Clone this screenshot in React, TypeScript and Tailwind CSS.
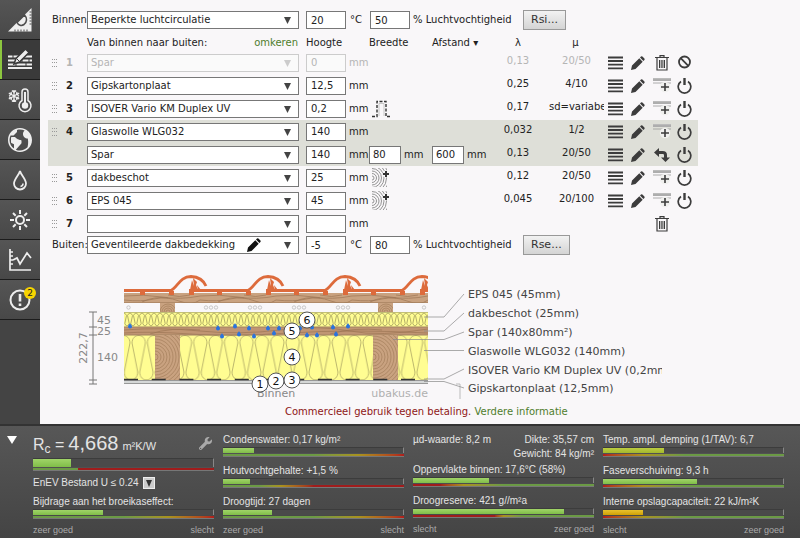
import type { ReactNode } from 'react'
import { FaWrench } from 'react-icons/fa'
import { ImEarth } from 'react-icons/im'

type Layer = {
  no?: number
  material: string
  height: string
  width?: string
  spacing?: string
  lambda?: string
  mu?: string
  extra?: 'foil' | 'wood'
  tool?: 'trash' | 'insert' | 'turn'
  disabled?: boolean
  active?: boolean
}

const LAYERS: Layer[] = [
  { no: 1, material: 'Spar', height: '0', lambda: '0,13', mu: '20/50', tool: 'trash', disabled: true },
  { no: 2, material: 'Gipskartonplaat', height: '12,5', lambda: '0,25', mu: '4/10', tool: 'insert' },
  { no: 3, material: 'ISOVER Vario KM Duplex UV', height: '0,2', lambda: '0,17', mu: 'sd=variabel', extra: 'foil', tool: 'insert' },
  { no: 4, material: 'Glaswolle WLG032', height: '140', lambda: '0,032', mu: '1/2', tool: 'insert', active: true },
  { material: 'Spar', height: '140', width: '80', spacing: '600', lambda: '0,13', mu: '20/50', tool: 'turn', active: true },
  { no: 5, material: 'dakbeschot', height: '25', lambda: '0,12', mu: '20/50', extra: 'wood', tool: 'insert' },
  { no: 6, material: 'EPS 045', height: '45', lambda: '0,045', mu: '20/100', extra: 'wood', tool: 'insert' },
  { no: 7, material: '', height: '', tool: 'trash' },
]

/* ---------- icons ---------- */

const RulerIcon = () => (
  <svg width="26" height="26" viewBox="0 0 26 26" fill="none">
    <path d="M1 24.500 24.500 1V24.500Z" fill="#eee" />
    <path d="M10 15.500 17.500 8C20.500 11 20 15 17 17.500 14.500 19.300 11.500 18.500 10 15.500Z" fill="#eee" stroke="#4c4c4c" strokeWidth="1.600" />
    <path d="M22.500 5h2M22.500 8h2M22.500 11h2M22.500 14h2M22.500 17h2M20 22.500v2M17 22.500v2M14 22.500v2M11 22.500v2M8 22.500v2" stroke="#4c4c4c" />
  </svg>
)

const LayersIcon = () => (
  <svg width="26" height="22" viewBox="0 0 26 22">
    <path d="M1 7.500h24M1 11.500h24M1 15.500h24M1 19h24" stroke="#eee" strokeWidth="2.200" />
    <path d="M6 6v4M15 10v4M22 10v4M9 14v4M19 14v4" stroke="#3a3a3a" />
    <path d="M7 15 9 9.500 18.500 0 22 3.500 12.500 13Z" fill="#eee" stroke="#3a3a3a" strokeWidth="1.500" />
    <path d="m9.500 9.500 3 3" stroke="#3a3a3a" />
  </svg>
)

const ClimateIcon = () => (
  <svg width="26" height="26" viewBox="0 0 26 26" fill="none" stroke="#eee">
    <path
      d="M7 3v12M1.800 6l10.400 6M12.200 6 1.800 12M5 3.500l2 2 2-2M5 14.500l2-2 2 2M2 8.500l2.500-1L4 5M12 8.500l-2.500-1L10 5M2 9.800l2.500 1L4 13M12 9.800l-2.500 1 .5 2.200"
      strokeWidth="1.300"
    />
    <path d="M15 13.500V5a3 3 0 0 1 6 0v8.500a6 6 0 1 1-6 0Z" strokeWidth="1.500" />
    <path d="M18 5v11" strokeWidth="2" />
    <circle cx="18" cy="18.500" r="3.200" fill="#eee" stroke="none" />
  </svg>
)

const DropIcon = () => (
  <svg width="16" height="22" viewBox="0 0 16 22" fill="none" stroke="#eee" strokeWidth="1.800">
    <path d="M8 2C7 6 2 10 2 14.500a6 6 0 0 0 12 0C14 10 9 6 8 2Z" />
    <path d="M11 14.500a3 3 0 0 1-2.500 3" strokeWidth="1.500" />
  </svg>
)

const SunIcon = () => (
  <svg width="22" height="22" viewBox="0 0 22 22" fill="none" stroke="#eee" strokeWidth="2">
    <circle cx="11" cy="11" r="4" />
    <path d="M11 1v4M11 17v4M1 11h4M17 11h4M4 4l2.700 2.700M15.300 15.300 18 18M4 18l2.700-2.700M15.300 6.700 18 4" />
  </svg>
)

const ChartIcon = () => (
  <svg width="24" height="24" viewBox="0 0 24 24" fill="none" stroke="#eee" strokeWidth="1.700">
    <path d="M2 1v21h21M2 4h3M2 8h3M2 12h3M2 16h3" />
    <path d="m5 12 4-2 3 6 7-11 4 5" />
  </svg>
)

const AlertIcon = () => (
  <svg width="22" height="22" viewBox="0 0 22 22" fill="none" stroke="#eee" strokeWidth="2">
    <circle cx="11" cy="11" r="9.500" />
    <path d="M11 5v7.500M11 14.500V17" strokeWidth="2.600" />
  </svg>
)

const PencilIcon = () => (
  <svg width="14" height="14" viewBox="0 0 14 14" fill="currentColor">
    <path d="M0 14 1 9.500 8.300 2.300 11.700 5.700 4.500 13ZM9 1.600 10 .6Q10.700 0 11.400.6L13.400 2.600Q14 3.300 13.400 4L12.400 5Z" />
  </svg>
)

const MenuIcon = () => (
  <svg width="15" height="14" viewBox="0 0 15 14" stroke="#3c3c3c" strokeWidth="1.800">
    <path d="M0 1.500h15M0 5h15M0 8.700h15M0 12.400h15" />
  </svg>
)

const TrashIcon = () => (
  <svg width="14" height="16" viewBox="0 0 14 16" fill="none" stroke="#3c3c3c" strokeWidth="1.200">
    <path d="M0 2.500h14M5 2V.7h4V2M2 3v12h10V3" />
    <path d="M4.500 5v8M6.200 5v8M7.900 5v8M9.500 5v8" strokeWidth="1" />
  </svg>
)

const InsertIcon = () => (
  <svg width="18" height="16" viewBox="0 0 18 16" fill="none">
    <path d="M0 1.500h18" stroke="#bbb" strokeWidth="3" />
    <path d="M0 5h18M0 2h18" stroke="#999" strokeWidth=".8" />
    <circle cx="12" cy="9" r="5.200" fill="#f0f0ee" />
    <path d="M12 5v8M8 9h8" stroke="#3c3c3c" strokeWidth="1.600" />
  </svg>
)

const TurnIcon = () => (
  <svg width="16" height="16" viewBox="0 0 16 16" fill="#3c3c3c">
    <path d="M0 5.500 5 1v3h3.500C11.500 4 13 5.500 13 8v2.500h3L11.500 15 7 10.500h3V8.200C10 7.300 9.500 7 8.500 7H5v3Z" />
  </svg>
)

const PowerIcon = () => (
  <svg width="15" height="16" viewBox="0 0 15 16" fill="none" stroke="#3c3c3c">
    <path d="M4 3.500a6.300 6.300 0 1 0 7 0" strokeWidth="1.700" />
    <path d="M7.500 0v7" strokeWidth="2.400" />
  </svg>
)

const BanIcon = () => (
  <svg width="15" height="16" viewBox="0 0 15 16" fill="none" stroke="#3c3c3c" strokeWidth="1.800">
    <circle cx="7.500" cy="7" r="5.500" />
    <path d="m3.700 3.200 7.600 7.600" />
  </svg>
)

const GripIcon = () => (
  <svg width="6" height="10" viewBox="0 0 6 10" fill="#999">
    <path d="M0 1h1v1H0zM2 1h1v1H2zM4 1h1v1H4zM0 4h1v1H0zM2 4h1v1H2zM4 4h1v1H4zM0 8h1v1H0zM2 8h1v1H2zM4 8h1v1H4z" />
  </svg>
)

const FoilIcon = () => (
  <svg width="20" height="18" viewBox="0 0 20 18" fill="none" stroke="#333" strokeWidth="1.400">
    <path d="M0 16.500h5V1.500h9v15h5" strokeDasharray="3 1.500" />
    <path d="M7 16V3.500h5V16" stroke="#bbb" strokeWidth=".8" />
  </svg>
)

const WoodIcon = () => (
  <svg width="18" height="19" viewBox="0 0 18 19" fill="none" stroke="#888" strokeWidth=".9">
    <svg width="15" height="19">
      {[2, 4.5, 7, 9.5, 12, 14.5, 17].map((r) => (
        <circle key={r} cx="0" cy="10" r={r} />
      ))}
    </svg>
    <circle cx="14" cy="6" r="3.500" fill="#f9f8f9" stroke="none" />
    <path d="M14 3v6M11 6h6" stroke="#333" strokeWidth="2" />
  </svg>
)

/* ---------- form parts ---------- */

function Combo({ label, value, disabled, pencil }: { label: string; value: string; disabled?: boolean; pencil?: boolean }) {
  return (
    <div className="relative w-[212px] shrink-0">
      <select
        aria-label={label}
        disabled={disabled}
        defaultValue={value}
        className="block h-[18px] w-full appearance-none border border-[#777] bg-white pl-[3px] text-[10px] leading-4 text-[#222] disabled:border-[#ccc] disabled:bg-[#fafafa] disabled:text-[#b5b5b5]"
      >
        <option>{value}</option>
      </select>
      {pencil && <span className="absolute top-0.5 right-[38px] text-[#111]"><PencilIcon /></span>}
      <svg
        className={disabled ? 'absolute top-1.5 right-2 text-[#ccc]' : 'absolute top-1.5 right-2 text-[#444]'}
        width="7"
        height="7"
        fill="currentColor"
      >
        <path d="M0 0h7L3.500 7Z" />
      </svg>
    </div>
  )
}

function Field({ label, value, disabled, narrow }: { label: string; value: string; disabled?: boolean; narrow?: boolean }) {
  return (
    <input
      aria-label={label}
      defaultValue={value}
      disabled={disabled}
      className={
        'block h-[18px] shrink-0 border border-[#777] bg-white pl-1 text-[10px] leading-4 text-[#222] disabled:border-[#ccc] disabled:bg-[#fafafa] disabled:text-[#b5b5b5] ' +
        (narrow ? 'w-8 pl-[3px]' : 'w-10')
      }
    />
  )
}

type BoundaryProps = { name: string; value: string; temp: string; humidity: string; button: string; pencil?: boolean }

function Boundary({ name, value, temp, humidity, button, pencil }: BoundaryProps) {
  return (
    <div className="flex h-5 items-center pl-3">
      <span className="w-[35px] shrink-0">{name}</span>
      <Combo label={name} value={value} pencil={pencil} />
      <div className="ml-[7px] flex items-center">
        <Field label={`${name} temperatuur`} value={temp} />
        <span className="w-6 pl-1">°C</span>
        <Field label={`${name} luchtvochtigheid`} value={humidity} />
        <span className="w-[113px] pl-[3px] whitespace-nowrap">% Luchtvochtigheid</span>
      </div>
      <button className="h-5 border border-[#999] bg-linear-to-b from-[#f2f2f2] to-[#d4d4d4] px-[7px] text-[11px] leading-4 text-[#333]">
        {button}
      </button>
    </div>
  )
}

function IconButton({ label, children }: { label: string; children: ReactNode }) {
  return (
    <button aria-label={label} className="flex items-center justify-center text-[#3c3c3c]">
      {children}
    </button>
  )
}

function LayerRow({ layer }: { layer: Layer }) {
  const { no, disabled, active, tool } = layer
  const name = no ? `Laag ${no}` : 'Tussenlaag'
  return (
    <tr className={(active ? 'bg-[#dedfd8] ' : '') + (disabled ? 'text-[#b5b5b5]' : '')}>
      <td className="h-[23px] pl-1">{no && <GripIcon />}</td>
      <td className="pl-1 font-bold">{no}</td>
      <td>
        <Combo label={`${name} materiaal`} value={layer.material} disabled={disabled} />
      </td>
      <td>
        <div className="flex items-center gap-[3px]">
          <Field label={`${name} hoogte`} value={layer.height} disabled={disabled} />
          mm
        </div>
      </td>
      <td>
        <div className="flex items-center gap-[3px]">
          {layer.width && (
            <>
              <Field narrow label={`${name} breedte`} value={layer.width} />
              mm
            </>
          )}
          {layer.extra && (
            <span className="pl-[3px]">{layer.extra === 'foil' ? <FoilIcon /> : <WoodIcon />}</span>
          )}
        </div>
      </td>
      <td>
        {layer.spacing && (
          <div className="flex items-center gap-[3px]">
            <Field narrow label={`${name} afstand`} value={layer.spacing} />
            mm
          </div>
        )}
      </td>
      <td className="pb-[3px] text-center">{layer.lambda}</td>
      <td className="overflow-hidden pb-[3px] pl-[2px] text-center whitespace-nowrap">{layer.mu}</td>
      <td>
        <div className="grid grid-cols-[22px_24px_24px_20px] items-center">
          {layer.mu ? (
            <>
              <IconButton label="Eigenschappen"><MenuIcon /></IconButton>
              <IconButton label="Bewerken"><PencilIcon /></IconButton>
            </>
          ) : (
            <span className="col-span-2" />
          )}
          {tool === 'trash' && <IconButton label="Verwijderen"><TrashIcon /></IconButton>}
          {tool === 'insert' && <IconButton label="Invoegen"><InsertIcon /></IconButton>}
          {tool === 'turn' && <IconButton label="Draaien"><TurnIcon /></IconButton>}
          {layer.mu && (
            <IconButton label="Aan/uit">{disabled ? <BanIcon /> : <PowerIcon />}</IconButton>
          )}
        </div>
      </td>
    </tr>
  )
}

/* ---------- cross section ---------- */

const TILES = [112, 189, 266, 343, 420]
const DROPS = [
  [130, 326], [218, 328], [222, 336], [235, 326], [249, 328], [239, 334], [254, 336], [268, 328], [274, 333],
  [279, 328], [300, 328], [307, 335], [312, 327], [317, 335], [333, 327], [336, 334], [348, 326],
]
const MARKERS = [
  [260, 384], [276, 381], [292, 380], [292, 357], [292, 331], [307, 320],
]
const LEGEND = [
  { text: 'EPS 045 (45mm)', y: 294, line: 'M424 317H444L464 294' },
  { text: 'dakbeschot (25mm)', y: 313, line: 'M424 331H444L464 313' },
  { text: 'Spar (140x80mm²)', y: 332, line: 'M393 339.500H444L464 332' },
  { text: 'Glaswolle WLG032 (140mm)', y: 351, line: 'M424 350.500H464' },
  { text: 'ISOVER Vario KM Duplex UV (0,2mm)', y: 370, line: 'M424 379H444L464 369' },
  { text: 'Gipskartonplaat (12,5mm)', y: 388, line: 'M424 381.500H444L464 388' },
]

function CrossSection() {
  return (
    <svg className="ml-9 block font-['DejaVu_Sans',sans-serif]" width="586" height="134" viewBox="76 270 586 134" fontSize="11">
      <defs>
        <clipPath id="section">
          <rect x="124" y="270" width="304" height="116" />
        </clipPath>
        <pattern id="eps" x="124" y="312" width="6" height="15" patternUnits="userSpaceOnUse">
          <path d="M-2.500 3.500Q0-1.500 2.500 3.500L.8 11.500Q3 16.500 5.200 11.500L3.500 3.500Q6-1.500 8.500 3.500" fill="none" stroke="#a09b5c" strokeWidth=".8" />
        </pattern>
        <pattern id="wool" x="123.300" y="335" width="15.400" height="45" patternUnits="userSpaceOnUse">
          <path
            d="M-6.700 8C-6.700-2 6.700-2 6.700 8L1 37C1 47.500 14.400 47.500 14.400 37L8.700 8C8.700-2 22.100-2 22.100 8"
            fill="none"
            stroke="#b5af68"
            strokeWidth=".9"
          />
        </pattern>
        <pattern id="grain" x="124" y="293" width="76" height="10" patternUnits="userSpaceOnUse">
          <path d="M0 3Q20 1 38 4T76 3M0 7Q18 9 30 6T55 8 76 7M18 9q12-6 26-4M44 2q12 3 22 0" fill="none" stroke="#9c7554" strokeWidth=".7" />
        </pattern>
        <clipPath id="beams">
          <path d="M155 335h25v45h-25zM373 335h25v45h-25zM160 303h15v9h-15zM378 303h15v9h-15z" />
        </clipPath>
      </defs>

      <g clipPath="url(#section)">
        {/* battens */}
        <path d="M124 293h304v10H124zM160 303h15v9h-15zM378 303h15v9h-15z" fill="#c9a280" />
        <path d="M124 293h304v10H124z" fill="url(#grain)" />
        <path d="M124 302.500h304" stroke="#a57f5d" strokeWidth=".7" />
        {[205, 249, 293, 337].map((x) => (
          <g key={x} fill="none" stroke="#bbb" strokeWidth=".8">
            <circle cx={x + 1} cy="307.500" r="1.700" />
            <circle cx={x + 6} cy="307.500" r="1.700" />
            <circle cx={x + 11} cy="307.500" r="1.700" />
          </g>
        ))}
        <g fill="none" stroke="#bbb" strokeWidth=".8">
          <circle cx="128.500" cy="307.500" r="1.700" />
          <circle cx="424" cy="307.500" r="1.700" />
        </g>

        {/* roof tiles */}
        {TILES.map((x) => (
          <g key={x} fill="#dd6b3c">
            <path d={`M${x} 289h60v3h-60zM${x} 289h5v6h-5zM${x + 28} 291h5v4h-5zM${x + 57} 291h5v4h-5z`} />
            <path d={`M${x + 1} 290l2-10 2 6-1-8 4 4-1 3 2 5-1-5 4 5z`} />
            <path d={`M${x + 58} 291C${x + 66} 288 ${x + 67} 276.500 ${x + 79} 276.500Q${x + 90} 277 ${x + 94} 286`} fill="none" stroke="#dd6b3c" strokeWidth="2.800" />
          </g>
        ))}

        {/* insulation and sheathing */}
        <path d="M124 312h304v15H124zM124 335h304v45H124z" fill="#fffd92" />
        <path d="M124 312h304v15H124z" fill="url(#eps)" />
        <path d="M124 335h304v45H124z" fill="url(#wool)" />
        <path d="M124 312.500h304" stroke="#aaa66a" strokeWidth=".7" />
        <path d="M124 327h304v8H124z" fill="#c09573" />
        <path d="M124 330Q160 327 200 331T280 330 350 331 428 329M124 333Q150 331 190 334T290 333 428 333M150 334q20-7 50-4M330 334q24-7 52-4" fill="none" stroke="#9c7554" strokeWidth=".7" />
        <path d="M124 327h304M124 335h304" stroke="#a28263" />

        {/* rafters */}
        <path d="M155 335h25v45h-25zM373 335h25v45h-25z" fill="#c9a280" />
        <g clipPath="url(#beams)" fill="none" stroke="#a8835f" strokeWidth=".8">
          {[3, 6, 9, 12, 15, 18, 21, 24, 27, 30, 33, 36, 39].map((r) => (
            <g key={r}>
              <circle cx="155" cy="357" r={r} />
              <circle cx="373" cy="357" r={r} />
            </g>
          ))}
          {[2, 4, 6, 8].map((r) => (
            <g key={r}>
              <circle cx="168" cy="312" r={r} />
              <circle cx="386" cy="312" r={r} />
            </g>
          ))}
        </g>

        {/* vapour barrier and plasterboard */}
        <path d="M124 380h304v4H124z" fill="#d5d7d7" />
        <path d="M124 380.500h304M124 383.500h304" stroke="#888" strokeWidth=".8" />
        <path d="M124 379.500h304" stroke="#333" strokeWidth="1.500" strokeDasharray="14 13.700" />
      </g>

      {DROPS.map(([x, y]) => (
        <path key={`${x}-${y}`} d={`M${x} ${y - 3}c.5 1.500 2 2 2 3.500a2 2 0 0 1-4 0c0-1.500 1.500-2 2-3.500`} fill="#2a73dd" />
      ))}

      {/* dimensions */}
      <path d="M93 312v72M89 312h8M89 327h8M89 335h8M89 380h8M89 384h8" stroke="#777" fill="none" />
      <g fill="#888">
        <text x="97" y="324">45</text>
        <text x="97" y="335">25</text>
        <text x="97" y="361">140</text>
        <text transform="translate(87 348) rotate(-90)" textAnchor="middle">222,7</text>
        <text x="257" y="397">Binnen</text>
        <text x="428" y="397" textAnchor="end" fill="#b0b0b0">ubakus.de</text>
      </g>

      {MARKERS.map(([x, y], i) => (
        <g key={i}>
          <circle cx={x} cy={y} r="8" fill="#fff" stroke="#555" />
          <text x={x} y={y + 4} textAnchor="middle" fill="#111">{i + 1}</text>
        </g>
      ))}

      <path d="M456 384h4v15" fill="none" stroke="#bbb" />
      {LEGEND.map((item) => (
        <g key={item.text}>
          <path d={item.line} fill="none" stroke="#888" strokeWidth=".7" />
          <text x="468" y={item.y + 4} fill="#444">{item.text}</text>
        </g>
      ))}
    </svg>
  )
}

/* ---------- results ---------- */

const FILLS = {
  green: 'h-full bg-linear-to-b from-[#a0d468] to-[#80bd48]',
  lime: 'h-full bg-linear-to-b from-[#bccc40] to-[#a3b82c]',
  amber: 'h-full bg-linear-to-b from-[#e8c22c] to-[#d0a000]',
}

const SCALES = {
  limit: 'h-0.5 bg-linear-to-r from-[#6b9a45] from-25% to-[#a01c1c] to-25%',
  good: 'h-0.5 bg-linear-to-r from-[#6b9a45] from-50% via-[#a8921e] via-75% to-[#b01c1c]',
  early: 'h-0.5 bg-linear-to-r from-[#6b9a45] from-20% via-[#a8921e] via-32% to-[#a01c1c] to-50%',
  rising: 'h-0.5 bg-linear-to-r from-[#a01c1c] from-15% via-[#a8921e] via-28% to-[#6b9a45] to-50%',
  late: 'h-0.5 bg-linear-to-r from-[#a01c1c] from-45% via-[#a8921e] via-50% to-[#6b9a45] to-60%',
  start: 'h-0.5 bg-linear-to-r from-[#b01c1c] via-[#a8921e] via-22% to-[#6b9a45] to-45%',
}

type MeterProps = { label: string; value: number; scale: keyof typeof SCALES; fill?: keyof typeof FILLS; tall?: boolean }

function Bar({ label, value, scale, fill = 'green', tall }: MeterProps) {
  return (
    <div role="meter" aria-label={label} aria-valuenow={value}>
      <div className={'border-t border-r border-t-[#3c3c3c] border-r-[#888] bg-[#4a4a4a] ' + (tall ? 'h-[9px]' : 'h-1.5')}>
        <div className={FILLS[fill]} style={{ width: `${value}%` }} />
      </div>
      <div className="border-b border-[#777] pt-px">
        <div className={SCALES[scale]} />
      </div>
    </div>
  )
}

function Metric(props: MeterProps) {
  return (
    <div className="mb-[7px]">
      <div className="h-3.5 whitespace-nowrap">{props.label}</div>
      <Bar {...props} />
    </div>
  )
}

function Ends({ left, right }: { left: string; right: string }) {
  return (
    <div className="-mt-[3px] flex justify-between text-[9px] text-[#aaa]">
      <span>{left}</span>
      <span>{right}</span>
    </div>
  )
}

function Results() {
  return (
    <footer className="flex border-t-2 border-[#333] bg-linear-to-b from-[#575757] to-[#444] pt-[7px] pr-4 pb-px font-['Liberation_Sans',Arial,sans-serif] text-[10px] leading-3.5 text-[#e4e4e4]">
      <div className="w-[33px] shrink-0 pt-[3px] pl-[7px]">
        <button aria-label="Inklappen" className="block">
          <svg width="10" height="8" fill="#fff"><path d="M0 0h10L5 8Z" /></svg>
        </button>
      </div>
      <div className="grid min-w-0 flex-1 grid-cols-4 gap-[9px]">
        <section>
          <div className="flex h-[25px] items-start justify-between">
            <div className="flex items-baseline whitespace-nowrap">
              <span className="text-base leading-5">R<sub>c</sub> =</span>
              <span className="ml-1 text-xl leading-5">4,668</span>
              <span className="ml-1 text-[11px]">m²K/W</span>
            </div>
            <button aria-label="Instellingen" className="mt-1 mr-0.5 text-[#aaa]"><FaWrench className="size-[13px]" /></button>
          </div>
          <Bar tall label="Rc" value={21} scale="limit" />
          <div className="flex h-[24px] items-center gap-1 whitespace-nowrap">
            <label htmlFor="norm">EnEV Bestand U ≤ 0.24</label>
            <span className="relative size-3 shrink-0 bg-[#ccc]">
              <select id="norm" className="block size-3 appearance-none border border-[#eee] text-transparent">
                <option aria-label="EnEV Bestand" />
              </select>
              <svg className="absolute top-[3px] left-[3px]" width="6" height="7" fill="#333"><path d="M0 0h6L3 7Z" /></svg>
            </span>
          </div>
          <Metric label="Bijdrage aan het broeikaseffect:" value={39} scale="good" />
          <Ends left="zeer goed" right="slecht" />
        </section>
        <section>
          <Metric label="Condenswater: 0,17 kg/m²" value={17} scale="good" />
          <Metric label="Houtvochtgehalte: +1,5 %" value={15} scale="early" />
          <Metric label="Droogtijd: 27 dagen" value={27} scale="good" />
          <Ends left="zeer goed" right="slecht" />
        </section>
        <section>
          <div className="flex justify-between">
            <span>µd-waarde: 8,2 m</span>
            <span>Dikte: 35,57 cm</span>
          </div>
          <div className="mb-0.5 text-right">Gewicht: 84 kg/m²</div>
          <Metric label="Oppervlakte binnen: 17,6°C (58%)" value={42} scale="rising" />
          <Metric label="Droogreserve: 421 g//m²a" value={84} scale="late" />
          <Ends left="slecht" right="zeer goed" />
        </section>
        <section>
          <Metric label="Temp. ampl. demping (1/TAV): 6,7" value={34} scale="start" fill="lime" />
          <Metric label="Faseverschuiving: 9,3 h" value={52} scale="start" />
          <Metric label="Interne opslagcapaciteit: 22 kJ/m²K" value={22} scale="start" fill="amber" />
          <Ends left="slecht" right="zeer goed" />
        </section>
      </div>
    </footer>
  )
}

const NAV = [
  { label: 'Geometrie', icon: <RulerIcon /> },
  { label: 'Lagen', icon: <LayersIcon />, current: true },
  { label: 'Klimaat', icon: <ClimateIcon /> },
  { label: 'Milieu', icon: <ImEarth className="size-6 text-[#eee]" /> },
  { label: 'Vocht', icon: <DropIcon /> },
  { label: 'Hitte', icon: <SunIcon /> },
  { label: 'Grafiek', icon: <ChartIcon /> },
  { label: 'Meldingen', icon: <AlertIcon />, badge: 2 },
]

export default function App() {
  return (
    <div className="flex min-h-screen flex-col bg-[#f9f7f9] font-['DejaVu_Sans',sans-serif] text-[10px] leading-4 text-[#222]">
      <div className="flex flex-1">
        <nav className="w-10 shrink-0 bg-[#444]">
          {NAV.map((item) => (
            <a
              key={item.label}
              href="#"
              aria-label={item.label}
              className={
                'relative flex h-10 items-center justify-center border-b border-[#1c1c1c] ' +
                (item.current ? 'bg-[#3a3a3a] shadow-[inset_2px_0_0_#8cc63f]' : 'bg-linear-to-b from-[#555] to-[#484848]')
              }
            >
              {item.icon}
              {item.badge && (
                <span className="absolute top-[7px] right-1 flex size-3 items-center justify-center rounded-full bg-[#f7d400] text-[9px] text-[#222]">
                  {item.badge}
                </span>
              )}
            </a>
          ))}
        </nav>

        <main className="min-w-0 flex-1 pt-2.5">
          <Boundary name="Binnen:" value="Beperkte luchtcirculatie" temp="20" humidity="50" button="Rsi..." />

          <table className="ml-2 w-[650px] table-fixed border-collapse text-left">
            <colgroup>
              <col className="w-[14px]" />
              <col className="w-[25px]" />
              <col className="w-[219px]" />
              <col className="w-[63px]" />
              <col className="w-[63px]" />
              <col className="w-[57px]" />
              <col className="w-[58px]" />
              <col className="w-[57px]" />
              <col className="w-[94px]" />
            </colgroup>
            <thead>
              <tr className="*:pt-1 *:font-normal *:whitespace-nowrap">
                <th className="h-[21px]" />
                <th />
                <th className="pr-2">
                  <div className="flex justify-between">
                    Van binnen naar buiten:
                    <a href="#" className="text-[#4f7d2c]">omkeren</a>
                  </div>
                </th>
                <th>Hoogte</th>
                <th>Breedte</th>
                <th>Afstand ▾</th>
                <th className="text-center">λ</th>
                <th className="text-center">μ</th>
                <th />
              </tr>
            </thead>
            <tbody>
              {LAYERS.map((layer, i) => (
                <LayerRow key={i} layer={layer} />
              ))}
            </tbody>
          </table>

          <Boundary name="Buiten:" value="Geventileerde dakbedekking" temp="-5" humidity="80" button="Rse..." pencil />

          <div className="mt-[15px]">
            <CrossSection />
          </div>
          <p className="ml-[245px] whitespace-nowrap text-[#8e1616]">
            Commercieel gebruik tegen betaling. <a href="#" className="text-[#4f7d2c]">Verdere informatie</a>
          </p>
        </main>
      </div>
      <Results />
    </div>
  )
}
